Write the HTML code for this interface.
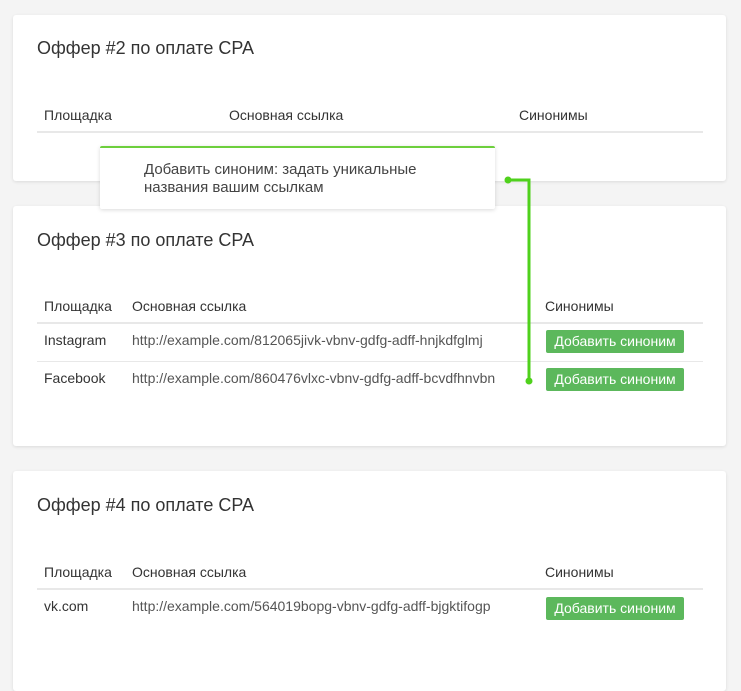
<!DOCTYPE html><html><head><style>
body{margin:0;background:#f4f4f4;font-family:"Liberation Sans",sans-serif;color:#333;width:741px;height:667px;overflow:hidden;position:relative}
.card{position:absolute;left:13px;width:713px;background:#fff;border-radius:3px;box-shadow:0 1px 3px rgba(0,0,0,.1)}
.t{position:absolute;left:24px;font-size:18px;color:#333}
.a{position:absolute;font-size:14px;color:#333;white-space:nowrap}
.u{color:#555}
.ln{position:absolute;left:24px;width:666px;height:1px;background:#e8e8e8}
.btn{position:absolute;left:533px;width:138px;height:23px;background:#5cb85c;border-radius:2px;color:#fff;font-size:14px;line-height:23px;text-align:center}
</style></head><body>
<div class="card" style="top:15px;height:166px">
<div class="t" style="top:23px">Оффер #2 по оплате CPA</div>
<div class="a" style="left:31px;top:92px">Площадка</div>
<div class="a" style="left:216px;top:92px">Основная ссылка</div>
<div class="a" style="left:506px;top:92px">Синонимы</div>
<div class="ln" style="top:116px;height:2px"></div>
</div>
<div class="card" style="top:206px;height:240px">
<div class="t" style="top:24px">Оффер #3 по оплате CPA</div>
<div class="a" style="left:31px;top:92px">Площадка</div>
<div class="a" style="left:119px;top:92px">Основная ссылка</div>
<div class="a" style="left:532px;top:92px">Синонимы</div>
<div class="ln" style="top:116px;height:2px"></div>
<div class="a" style="left:31px;top:126px">Instagram</div>
<div class="a u" style="left:119px;top:126px">http://example.com/812065jivk-vbnv-gdfg-adff-hnjkdfglmj</div>
<div class="btn" style="top:124px">Добавить синоним</div>
<div class="ln" style="top:155px"></div>
<div class="a" style="left:31px;top:164px">Facebook</div>
<div class="a u" style="left:119px;top:164px">http://example.com/860476vlxc-vbnv-gdfg-adff-bcvdfhnvbn</div>
<div class="btn" style="top:162px">Добавить синоним</div>
</div>
<div class="card" style="top:471px;height:220px">
<div class="t" style="top:24px">Оффер #4 по оплате CPA</div>
<div class="a" style="left:31px;top:93px">Площадка</div>
<div class="a" style="left:119px;top:93px">Основная ссылка</div>
<div class="a" style="left:532px;top:93px">Синонимы</div>
<div class="ln" style="top:117px;height:2px"></div>
<div class="a" style="left:31px;top:127px">vk.com</div>
<div class="a u" style="left:119px;top:127px">http://example.com/564019bopg-vbnv-gdfg-adff-bjgktifogp</div>
<div class="btn" style="top:126px">Добавить синоним</div>
</div>
<div style="position:absolute;left:100px;top:146px;width:395px;height:63px;background:#fff;border-top:2px solid #6dcf3c;box-sizing:border-box;border-radius:2px;box-shadow:0 1px 4px rgba(0,0,0,.15)">
<div class="a" style="left:44px;top:13px;font-size:15px;line-height:18px;color:#444">Добавить синоним: задать уникальные<br>названия вашим ссылкам</div></div>
<svg style="position:absolute;left:0;top:0" width="741" height="667"><path d="M508 180H529V381" fill="none" stroke="#4fd11c" stroke-width="3"/><circle cx="508" cy="180" r="3.5" fill="#4fd11c"/><circle cx="529" cy="381" r="3.5" fill="#4fd11c"/></svg>
</body></html>
